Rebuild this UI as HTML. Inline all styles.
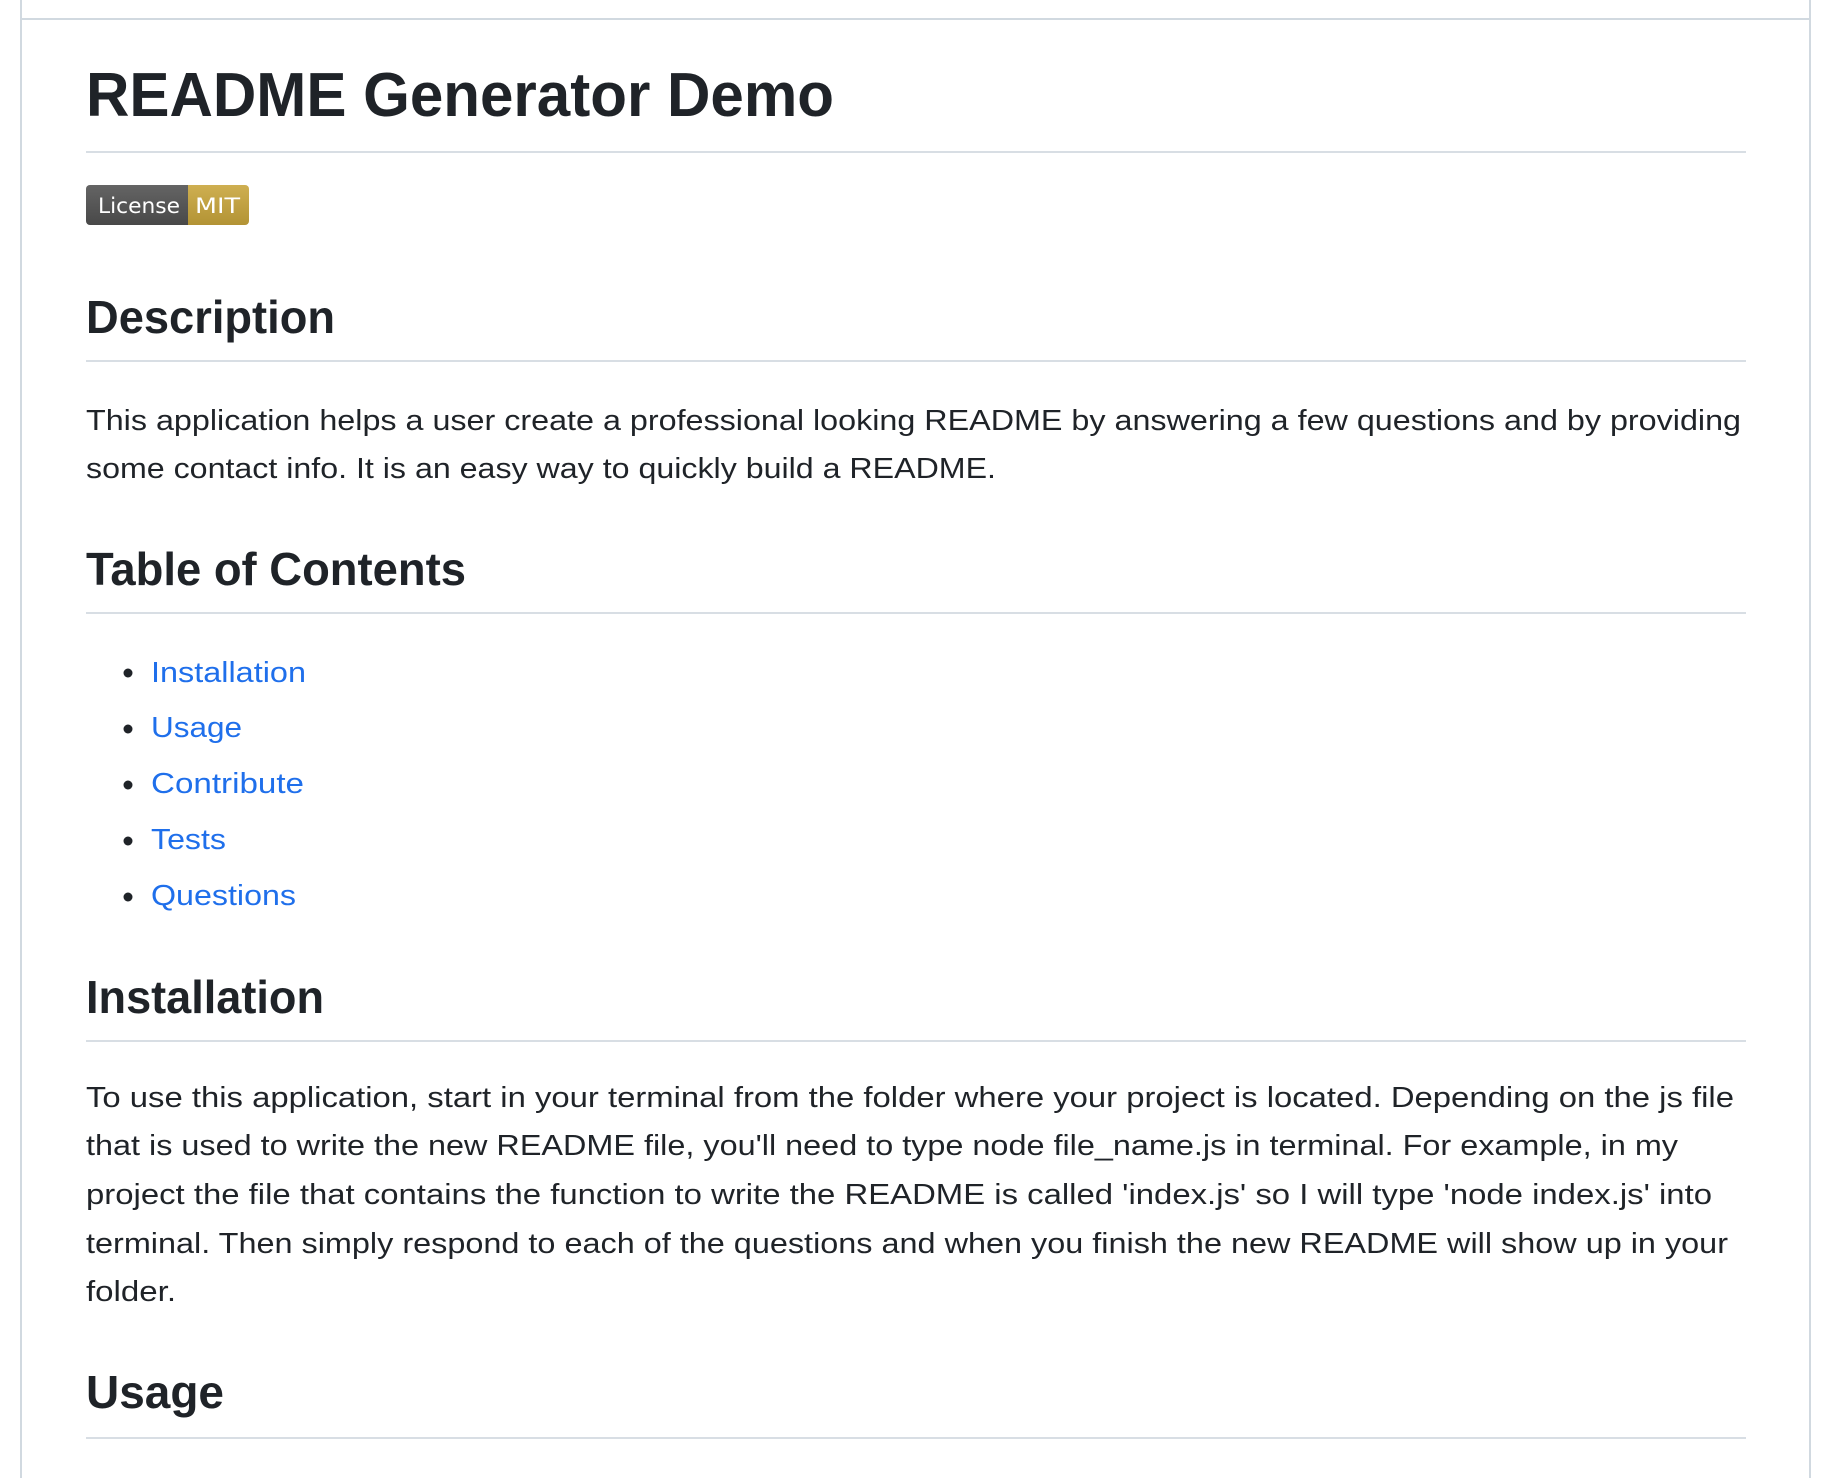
<!DOCTYPE html>
<html><head><meta charset="utf-8"><style>
html,body{margin:0;padding:0;background:#fff;}
svg{display:block;}
text{font-family:"Liberation Sans",Arial,sans-serif;fill:#1f2328;}
.h{font-weight:bold;font-size:46px;}
.b{font-size:29px;}
.l{font-size:29px;fill:#1f6feb;}
</style></head><body>
<svg width="1826" height="1478" viewBox="0 0 1826 1478" xmlns="http://www.w3.org/2000/svg">
<rect x="0" y="0" width="1826" height="1478" fill="#fff"/>
<rect x="20" y="0" width="2" height="1478" fill="#d1d9e0"/>
<rect x="1809" y="0" width="2" height="1478" fill="#d1d9e0"/>
<rect x="20" y="18" width="1791" height="2" fill="#d1d9e0"/>

<text x="86" y="116" style="font-weight:bold;font-size:62px" textLength="748" lengthAdjust="spacingAndGlyphs">README Generator Demo</text>
<rect x="86" y="151" width="1660" height="2" fill="#d8dee4"/>

<defs>
<linearGradient id="g" x1="0" y1="0" x2="0" y2="1"><stop offset="0" stop-color="#bbb" stop-opacity=".15"/><stop offset="1" stop-opacity=".15"/></linearGradient>
<clipPath id="c"><rect x="86" y="185" width="163" height="40" rx="4"/></clipPath>
</defs>
<g clip-path="url(#c)">
<rect x="86" y="185" width="102" height="40" fill="#555"/>
<rect x="188" y="185" width="61" height="40" fill="#d2ad3e"/>
<rect x="86" y="185" width="163" height="40" fill="url(#g)"/>
</g>
<text x="98" y="213" style="font-family:'DejaVu Sans',sans-serif;font-size:21px;fill:#fff" textLength="82" lengthAdjust="spacingAndGlyphs">License</text>
<text x="195" y="213" style="font-family:'DejaVu Sans',sans-serif;font-size:21px;fill:#fff" textLength="45" lengthAdjust="spacingAndGlyphs">MIT</text>

<text class="h" x="86" y="333" textLength="249" lengthAdjust="spacingAndGlyphs">Description</text>
<rect x="86" y="360" width="1660" height="2" fill="#d8dee4"/>
<text class="b" x="86" y="430" textLength="1655" lengthAdjust="spacingAndGlyphs">This application helps a user create a professional looking README by answering a few questions and by providing</text>
<text class="b" x="86" y="478" textLength="910" lengthAdjust="spacingAndGlyphs">some contact info. It is an easy way to quickly build a README.</text>

<text class="h" x="86" y="585" textLength="380" lengthAdjust="spacingAndGlyphs">Table of Contents</text>
<rect x="86" y="612" width="1660" height="2" fill="#d8dee4"/>
<circle cx="128" cy="673" r="4.5" fill="#1f2328"/>
<circle cx="128" cy="729" r="4.5" fill="#1f2328"/>
<circle cx="128" cy="785" r="4.5" fill="#1f2328"/>
<circle cx="128" cy="841" r="4.5" fill="#1f2328"/>
<circle cx="128" cy="897" r="4.5" fill="#1f2328"/>
<text class="l" x="151" y="682" textLength="155" lengthAdjust="spacingAndGlyphs">Installation</text>
<text class="l" x="151" y="737" textLength="91" lengthAdjust="spacingAndGlyphs">Usage</text>
<text class="l" x="151" y="793" textLength="153" lengthAdjust="spacingAndGlyphs">Contribute</text>
<text class="l" x="151" y="849" textLength="75" lengthAdjust="spacingAndGlyphs">Tests</text>
<text class="l" x="151" y="905" textLength="145" lengthAdjust="spacingAndGlyphs">Questions</text>

<text class="h" x="86" y="1013" textLength="238" lengthAdjust="spacingAndGlyphs">Installation</text>
<rect x="86" y="1040" width="1660" height="2" fill="#d8dee4"/>
<text class="b" x="86" y="1107" textLength="1648" lengthAdjust="spacingAndGlyphs">To use this application, start in your terminal from the folder where your project is located. Depending on the js file</text>
<text class="b" x="86" y="1155" textLength="1592" lengthAdjust="spacingAndGlyphs">that is used to write the new README file, you'll need to type node file_name.js in terminal. For example, in my</text>
<text class="b" x="86" y="1204" textLength="1626" lengthAdjust="spacingAndGlyphs">project the file that contains the function to write the README is called 'index.js' so I will type 'node index.js' into</text>
<text class="b" x="86" y="1253" textLength="1642" lengthAdjust="spacingAndGlyphs">terminal. Then simply respond to each of the questions and when you finish the new README will show up in your</text>
<text class="b" x="86" y="1301" textLength="90" lengthAdjust="spacingAndGlyphs">folder.</text>

<text class="h" x="86" y="1408" textLength="138" lengthAdjust="spacingAndGlyphs">Usage</text>
<rect x="86" y="1437" width="1660" height="2" fill="#d8dee4"/>
</svg>
</body></html>
